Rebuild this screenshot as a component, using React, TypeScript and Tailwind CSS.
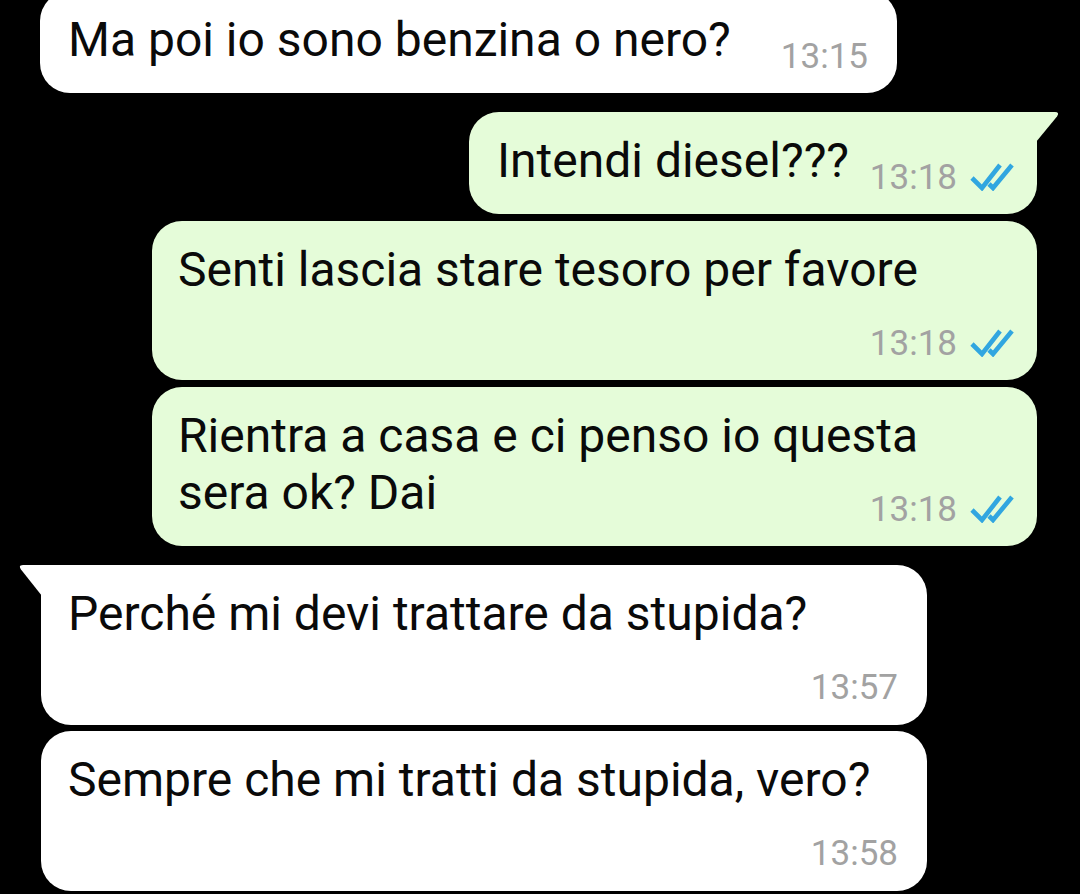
import React from "react";

const Ticks = () => (
  <svg
    width="44"
    height="28"
    viewBox="0 0 44 28"
    className="mb-[7px] ml-[13px] shrink-0"
    fill="none"
    stroke="#31a6e0"
    strokeWidth="4.6"
  >
    <path d="M2 15 L12 25 L30 2" />
    <path d="M19 21 L23 25 L42 2" />
  </svg>
);

const Time = ({ t, ticks }: { t: string; ticks?: boolean }) => (
  <div className="flex items-end shrink-0">
    <span className="text-[35px] leading-[40px] text-[#a2a2a2]">{t}</span>
    {ticks && <Ticks />}
  </div>
);

const TailRight = ({ color }: { color: string }) => (
  <svg
    width="24"
    height="30"
    viewBox="0 0 24 30"
    className="absolute left-[calc(100%-1px)] top-0"
  >
    <path d="M0 0 H19 Q24 0 21 4.5 L0 30 Z" fill={color} />
  </svg>
);

const TailLeft = ({ color }: { color: string }) => (
  <svg
    width="23"
    height="31"
    viewBox="0 0 23 31"
    className="absolute right-[calc(100%-1px)] top-0"
  >
    <path d="M23 0 H4 Q-1 0 2 4.5 L23 31 Z" fill={color} />
  </svg>
);

const GREEN = "#e5fcd9";

export default function App() {
  return (
    <div
      className="w-[1080px] h-[894px] bg-black overflow-hidden flex flex-col text-[48px] leading-[57px] text-[#0a0a0a]"
      style={{ fontFamily: "Roboto, 'Noto Sans', sans-serif" }}
    >
      {/* Bubble 1 */}
      <div className="mt-[-9px] ml-[40px] self-start w-[857px] bg-white rounded-[30px] pt-[20px] pb-[25px] pl-[28px] pr-[29px] flex items-end justify-between">
        <span>Ma poi io sono benzina o nero?</span>
        <div className="mb-[-9px]">
          <Time t="13:15" />
        </div>
      </div>

      {/* Bubble 2 */}
      <div className="relative mt-[19px] mr-[43px] self-end w-[568px] bg-[#e5fcd9] rounded-[30px] rounded-tr-none pt-[20px] pb-[25px] pl-[28px] pr-[23px] flex items-end justify-between">
        <TailRight color={GREEN} />
        <span>Intendi diesel???</span>
        <div className="mb-[-9px]">
          <Time t="13:18" ticks />
        </div>
      </div>

      {/* Bubble 3 */}
      <div className="mt-[7px] mr-[43px] self-end w-[885px] bg-[#e5fcd9] rounded-[30px] pt-[20px] pb-[16px] pl-[26px] pr-[23px] flex flex-col">
        <span>Senti lascia stare tesoro per favore</span>
        <div className="mt-[26px] flex justify-end">
          <Time t="13:18" ticks />
        </div>
      </div>

      {/* Bubble 4 */}
      <div className="mt-[7px] mr-[43px] self-end w-[885px] bg-[#e5fcd9] rounded-[30px] pt-[20px] pb-[25px] pl-[26px] pr-[23px] flex flex-col">
        <span>Rientra a casa e ci penso io questa</span>
        <div className="flex items-end justify-between">
          <span>sera ok? Dai</span>
          <div className="mb-[-9px]">
            <Time t="13:18" ticks />
          </div>
        </div>
      </div>

      {/* Bubble 5 */}
      <div className="relative mt-[19px] ml-[41px] self-start w-[886px] bg-white rounded-[30px] rounded-tl-none pt-[20px] pb-[17px] pl-[27px] pr-[29px] flex flex-col">
        <TailLeft color="#ffffff" />
        <span>Perché mi devi trattare da stupida?</span>
        <div className="mt-[26px] flex justify-end">
          <Time t="13:57" />
        </div>
      </div>

      {/* Bubble 6 */}
      <div className="mt-[6px] ml-[41px] self-start w-[886px] bg-white rounded-[30px] pt-[20px] pb-[17px] pl-[27px] pr-[29px] flex flex-col">
        <span>Sempre che mi tratti da stupida, vero?</span>
        <div className="mt-[26px] flex justify-end">
          <Time t="13:58" />
        </div>
      </div>
    </div>
  );
}
